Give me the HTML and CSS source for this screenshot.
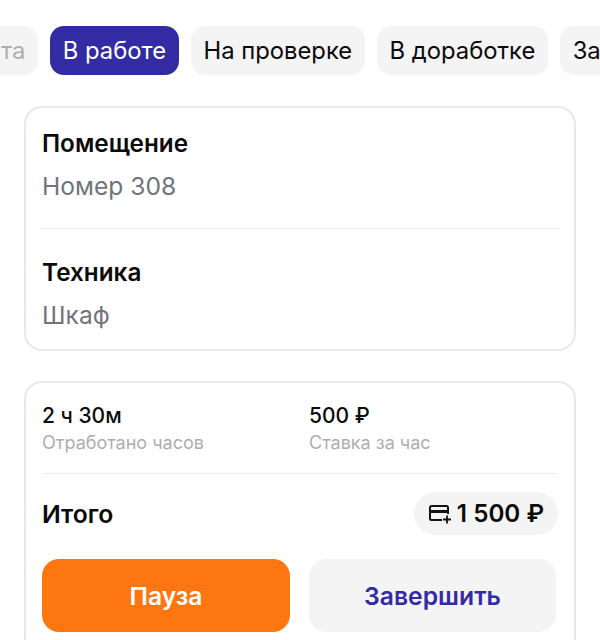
FILE: index.html
```html
<!DOCTYPE html>
<html lang="ru">

<head>
    <meta charset="UTF-8" />
    <meta name="viewport" content="width=device-width, initial-scale=1.0" />
    <title>Задача</title>
    <link rel="stylesheet" href="styles.css">
</head>

<body>
    <div class="tabs-wrap">
        <div class="tabs">
            <div class="tab tab-muted">Оплата</div>
            <div class="tab tab-active">В работе</div>
            <div class="tab">На проверке</div>
            <div class="tab">В доработке</div>
            <div class="tab">Завершена</div>
        </div>
    </div>

    <div class="card info-card">
        <div class="info-row">
            <div class="info-title">Помещение</div>
            <div class="info-value">Номер 308</div>
        </div>
        <div class="info-row">
            <div class="info-title">Техника</div>
            <div class="info-value">Шкаф</div>
        </div>
    </div>

    <div class="card pay-card">
        <div class="stats">
            <div>
                <div class="stat-value">2 ч 30м</div>
                <div class="stat-label">Отработано часов</div>
            </div>
            <div>
                <div class="stat-value">500 ₽</div>
                <div class="stat-label">Ставка за час</div>
            </div>
        </div>
        <div class="total">
            <div class="total-title">Итого</div>
            <div class="total-pill">
                <svg class="card-icon" width="24" height="20" viewBox="0 0 24 20" fill="none" stroke="#111" stroke-width="2">
                    <path d="M20 10V3.500C20 2.700 19.300 2 18.500 2H3.500C2.700 2 2 2.700 2 3.500V14.500C2 15.300 2.700 16 3.500 16H14" />
                    <path d="M2 7.500H20" stroke-width="3" />
                    <path d="M15 15.500H23M19 11.500V19.500" stroke-width="1.800" />
                </svg>
                <span>1 500 ₽</span>
            </div>
        </div>
        <div class="actions">
            <button class="btn btn-pause">Пауза</button>
            <button class="btn btn-finish">Завершить</button>
        </div>
    </div>
</body>

</html>
```

FILE: styles.css
```css
html {
    overflow: hidden;
}

body {
    margin: 0;
    height: 640px;
    overflow: hidden;
    background: #fff;
    font-family: "Inter", "Noto Sans", sans-serif;
    color: #0b0b0b;
}

.tabs-wrap {
    overflow: hidden;
    padding-top: 26px;
}

.tabs {
    display: flex;
    gap: 12px;
    margin-left: -71px;
}

.tab {
    flex: none;
    height: 49px;
    padding: 0 12.7px;
    display: flex;
    align-items: center;
    background: #f4f4f5;
    border-radius: 14px;
    font-size: 23.8px;
}

.tab-muted {
    color: #aeaeb0;
}

.tab-active {
    background: #332ba3;
    color: #fff;
}

.card {
    margin: 0 24px;
    padding: 0 16px;
    border: 2px solid #e8e8ea;
    border-radius: 18px;
}

.info-card {
    margin-top: 31px;
    margin-bottom: 30px;
    height: 241px;
}

.info-row {
    height: 120px;
    box-sizing: border-box;
    padding-top: 20px;
}

.info-row + .info-row {
    padding-top: 28px;
    border-top: 1px solid #ececee;
}

.info-title {
    font-size: 24.3px;
    font-weight: 600;
    line-height: 30px;
}

.info-value {
    margin-top: 13px;
    font-size: 24.6px;
    line-height: 30px;
    color: #70747c;
}

.info-row + .info-row .info-value {
    margin-top: 13px;
}

.pay-card {
    height: 300px;
}

.stats {
    display: grid;
    grid-template-columns: 267px 1fr;
    height: 91px;
    box-sizing: border-box;
    padding-top: 20px;
    border-bottom: 1px solid #ececee;
}

.stat-value {
    font-size: 21px;
    font-weight: 500;
    line-height: 26px;
}

.stat-label {
    margin-top: 2px;
    font-size: 18px;
    line-height: 24px;
    color: #aeaeb0;
}

.total {
    display: flex;
    justify-content: space-between;
    align-items: center;
    height: 79px;
}

.total-title {
    font-size: 24.7px;
    font-weight: 600;
}

.total-pill {
    display: flex;
    align-items: center;
    gap: 5px;
    height: 43px;
    padding: 0 14px 0 14px;
    background: #f4f4f5;
    border-radius: 22px;
    font-size: 24.2px;
    font-weight: 600;
}

.actions {
    display: grid;
    grid-template-columns: 248px 247px;
    gap: 19px;
    margin-top: 6px;
}

.btn {
    height: 73px;
    border: none;
    border-radius: 17px;
    font-family: inherit;
    font-size: 24.7px;
    font-weight: 600;
}

.btn-pause {
    background: #fd7611;
    color: #fff;
}

.btn-finish {
    background: #f4f4f5;
    color: #332ba3;
}
```
